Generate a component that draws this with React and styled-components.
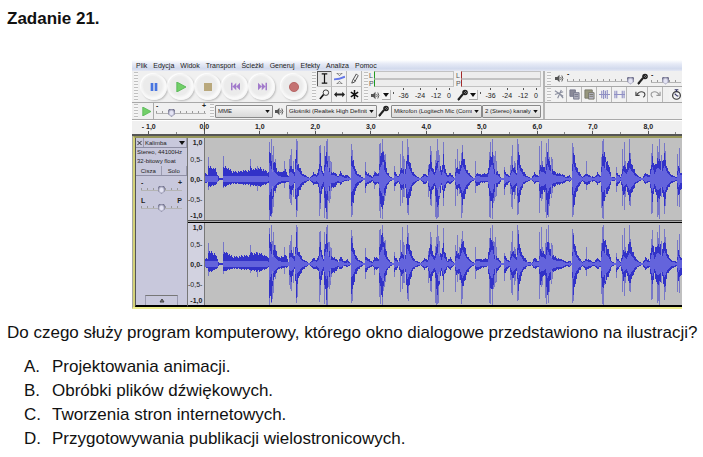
import React from "react";
import styled, { createGlobalStyle, css } from "styled-components";

const GlobalStyle = createGlobalStyle`
  * { box-sizing: border-box; }
  body { margin: 0; background: #fff; color: #111; font-family: "Liberation Sans", Arial, sans-serif; }
  button, select, input { font: inherit; color: inherit; margin: 0; padding: 0; border: 0; }
`;

const Page = styled.main`
  padding: 7px 7px 0;
  font-size: 17px;
`;
const Title = styled.h1`
  margin: 0;
  font-size: 17px;
  line-height: 24px;
`;
const Question = styled.p`
  margin: 0;
  padding-top: 12px;
  line-height: 24px;
  white-space: nowrap;
`;
const Answers = styled.ol`
  list-style: none;
  margin: 10px 0 0;
  padding: 0 0 0 17px;
`;
const Answer = styled.li`
  display: flex;
  line-height: 24px;
`;
const Letter = styled.span`
  width: 28px;
`;

/* ---------- editor window ---------- */
const Editor = styled.figure`
  margin: 29px 14px 0 125px;
  background: #f0f0f0;
  color: #222;
  font-size: 7px;
  line-height: 8px;
  overflow: hidden;
`;
const Menu = styled.nav`
  display: flex;
  gap: 6px;
  height: 11px;
  padding-left: 4px;
  align-items: center;
  background: linear-gradient(#fff, #e6eaf6 35%, #d2daed 80%, #e4e8f4);
`;
const MenuItem = styled.button`
  background: none;
  line-height: 8px;
`;
const Bars = styled.div`
  display: flex;
  border-bottom: 1px solid #aaa;
`;
const LeftBars = styled.div`
  width: 413px;
  flex: none;
  border-right: 2px solid #b4b4b4;
`;
const RightBars = styled.div`
  flex: 1;
  min-width: 0;
`;
const Bar = styled.div`
  display: flex;
  align-items: center;
  height: ${(p) => p.$h}px;
  overflow: hidden;
  border-bottom: ${(p) => (p.$line ? "1px solid #a8a8a8" : "0")};
`;
const Grip = styled.span`
  flex: none;
  align-self: stretch;
  width: 4px;
  margin: 1px 1px 1px 2px;
  background: repeating-linear-gradient(#c0c0c0 0 1px, #f6f6f6 1px 3px);
`;
const Transport = styled.div`
  display: flex;
  gap: 1px;
  width: 171px;
  padding-left: 2px;
`;
const RoundButton = styled.button`
  display: grid;
  place-items: center;
  width: 26px;
  height: 26px;
  border-radius: 50%;
  background: radial-gradient(circle at 45% 45%, #ebebeb 45%, #fafafa 62%, #e6e6e6);
  box-shadow: 1px 1px 2px #bbb, -1px -1px 1px #fff;
  margin-left: ${(p) => (p.$apart ? "5px" : "0")};
`;
const Tools = styled.div`
  display: grid;
  grid-template-columns: repeat(3, 15px);
  grid-auto-rows: 16px;
  align-self: stretch;
`;
const Tool = styled.button`
  display: grid;
  place-items: center;
  background: ${(p) => (p.$on ? "#e2e2e2" : "#f2f2f2")};
  border-right: 1px solid #b8b8b8;
  border-bottom: 1px solid #c4c4c4;
  ${(p) => p.$on && css`box-shadow: inset 1px 1px 0 #555;`}
`;
const Meters = styled.div`
  display: flex;
  gap: 2px;
  flex: 1;
  align-self: stretch;
`;
const Meter = styled.div`
  width: 85px;
`;
const MeterLine = styled.div`
  display: flex;
  height: 8px;
  color: #555;
  line-height: 9px;
`;
const Level = styled.div`
  flex: 1;
  border: 1px solid #c2c2c2;
  border-left: 1px solid ${(p) => p.$color};
  background: #ededed;
`;
const Channel = styled.span`
  width: 5px;
`;
const MeterScale = styled.div`
  display: flex;
  height: 16px;
  align-items: center;
`;
const DropButton = styled.button`
  display: grid;
  place-items: center;
  width: 9px;
  height: 10px;
  background: #f6f6f6;
  border-right: 1px solid #bbb;
  border-bottom: 1px solid #aaa;
`;
const Mark = styled.span`
  width: ${(p) => p.$w}px;
  text-align: center;
  white-space: nowrap;
  &::before {
    content: "";
    display: block;
    width: 1px;
    height: 2px;
    margin: -2px auto 2px;
    background: #555;
  }
`;
const Range = styled.input.attrs({ type: "range" })`
  appearance: none;
  flex: ${(p) => (p.$w ? "none" : 1)};
  min-width: 0;
  width: ${(p) => p.$w || 30}px;
  height: 10px;
  background:
    linear-gradient(#b4b4b4, #b4b4b4) 0 5px / 100% 1px no-repeat,
    repeating-linear-gradient(90deg, #999 0 1px, transparent 1px 6px) 0 3px / 100% 3px no-repeat;
  &::-webkit-slider-thumb {
    appearance: none;
    width: 7px;
    height: 8px;
    background: radial-gradient(#e4e4f4 30%, #70708c 75%);
    clip-path: polygon(15% 0, 85% 0, 100% 20%, 100% 65%, 50% 100%, 0 65%, 0 20%);
  }
`;
const SliderBox = styled.label`
  display: flex;
  flex: ${(p) => (p.$w ? "none" : 1)};
  flex-direction: column;
  width: ${(p) => (p.$w ? p.$w + "px" : "auto")};
  min-width: 0;
  font-weight: bold;
`;
const Ends = styled.span`
  display: flex;
  justify-content: space-between;
  height: 4px;
  line-height: 4px;
`;
const PickerBox = styled.span`
  display: grid;
  flex: none;
  align-items: center;
  width: ${(p) => p.$w}px;
  font-size: 6px;
  & > * { grid-area: 1 / 1; }
  & > svg { justify-self: end; margin-right: 3px; pointer-events: none; }
`;
const PickerSelect = styled.select`
  appearance: none;
  width: 100%;
  min-width: 0;
  height: 13px;
  padding: 0 9px 0 2px;
  border: 1px solid #8a8a8a;
  border-radius: 1px;
  text-overflow: clip;
  background: linear-gradient(#f4f4f4, #dadada);
`;
const IconSlot = styled.span`
  display: grid;
  place-items: center;
  flex: none;
  width: ${(p) => p.$w}px;
`;
const PlayBox = styled.button`
  display: grid;
  place-items: center;
  width: 15px;
  height: 16px;
  background: #f0f0f0;
  border-right: 1px solid #aaa;
`;
const EditButton = styled.button`
  display: grid;
  place-items: center;
  flex: none;
  width: 15px;
  height: 15px;
  background: #f2f2f2;
  border-right: 1px solid #b8b8b8;
  margin-left: ${(p) => (p.$apart ? "6px" : "0")};
`;
const Timeline = styled.div`
  border-top: 1px solid #fff;
  border-bottom: 2px solid #555;
  overflow: hidden;
`;
const Seconds = styled.div`
  display: grid;
  grid-template-columns: repeat(10, 1fr);
  margin-left: -11px;
  padding-right: 6px;
`;
const Second = styled.span`
  height: 13px;
  line-height: 12px;
  font-weight: bold;
  text-align: center;
  background:
    linear-gradient(#555, #555) 50% 100% / 1px 3px no-repeat,
    linear-gradient(#888, #888) 100% 100% / 1px 2px no-repeat;
  ${(p) => p.$start && css`background: linear-gradient(#555, #555) 50% 100% / 1px 12px no-repeat;`}
`;
const Track = styled.section`
  display: flex;
  border-left: 1px solid #a5a5a0;
  border-bottom: 2px solid #ecec8c;
`;
const TrackFrame = styled.div`
  display: flex;
  flex: 1;
  min-width: 0;
  border-left: 2px solid #d4d278;
  border-top: 2px solid #96965a;
`;
const TrackPanel = styled.div`
  display: flex;
  flex-direction: column;
  width: 53px;
  flex: none;
  background: #c8c8dc;
  border-left: 1px solid #555;
  border-right: 1px solid #777;
  border-bottom: 2px solid #000;
`;
const PanelRow = styled.div`
  display: flex;
  height: 10px;
  align-items: center;
  border-bottom: 1px solid #8f8fa5;
`;
const PanelButton = styled.button`
  display: flex;
  align-items: center;
  justify-content: ${(p) => (p.$spread ? "space-between" : "center")};
  flex: ${(p) => (p.$w ? "none" : 1)};
  width: ${(p) => p.$w || 10}px;
  height: 9px;
  padding: 0 1px;
  font-size: 6px;
  line-height: 8px;
  background: none;
  border-right: 1px solid #9b9bb0;
`;
const PanelText = styled.div`
  padding-left: 1px;
  font-size: 6px;
  line-height: 9px;
  white-space: nowrap;
`;
const PanelSliders = styled.div`
  display: grid;
  gap: 4px;
  padding: 5px 5px 0;
`;
const Collapse = styled.button`
  display: grid;
  place-items: center;
  width: 33px;
  height: 10px;
  margin: auto auto 0;
  background: #c8c8dc;
  border: 1px solid #9b9bb0;
  border-top: 1px solid #777;
  border-bottom: 0;
`;
const Channels = styled.div`
  flex: 1;
  min-width: 0;
  border-bottom: 2px solid #000;
`;
const ChannelRow = styled.div`
  display: flex;
  height: 82px;
`;
const ChannelGap = styled.div`
  height: 3px;
  border-top: 1px solid #555;
  border-bottom: 1px solid #000;
  background: #aaa;
`;
const Amplitudes = styled.div`
  display: grid;
  grid-template-rows: 9px 25px 15px 25px 8px;
  align-items: center;
  width: 17px;
  flex: none;
  padding-right: 2px;
  text-align: right;
  background: #d2d2e0;
  border-right: 1px solid #777;
`;
const Amplitude = styled.span`
  font-weight: ${(p) => (p.$strong ? "bold" : "normal")};
`;
const WaveSvg = styled.svg`
  display: block;
  flex: 1;
  min-width: 0;
  height: 82px;
  background: #c0c0c0;
`;

/* ---------- wave form ---------- */
// One-sample-wide maxima: [position, above, below]
const PEAKS = [
  [3,22,11],[18,23,9],[45,20,8],[52,13,12],[64,37,41],[66,40,38],[67,24,34],[68,33,28],[70,20,14],[79,18,9],
  [84,20,20],[85,24,24],[86,30,26],[88,18,18],[90,16,14],[91,40,38],[92,38,32],[114,33,37],[115,34,30],[119,33,39],[121,38,40],[122,40,40],
  [123,23,22],[124,23,24],[125,18,20],[126,17,12],[146,35,38],[147,29,36],[160,17,14],[169,8,10],[174,35,32],[175,36,39],[177,40,40],[178,28,26],[179,24,22],[180,25,17],
  [189,13,12],[195,25,27],[197,38,24],[198,23,18],[199,20,18],[202,40,34],[203,32,36],[223,14,18],[225,33,26],[226,28,27],[230,19,38],[231,28,40],[232,40,39],
  [233,29,38],[234,24,20],[238,37,27],[239,24,17],[251,20,27],[253,30,17],[255,18,15],[257,26,39],[258,34,34],[271,18,14],[285,27,38],
  [286,37,39],[288,40,40],[289,24,24],[290,23,22],[291,28,18],[292,18,17],[300,12,16],[306,14,15],[307,23,28],[308,34,30],[310,18,20],[311,16,16],
  [313,40,36],[314,35,35],[335,33,34],[337,38,22],[338,18,20],[341,22,33],[342,36,39],[344,40,38],[345,22,27],[347,22,19],[348,20,14],
  [368,36,38],[369,32,36],[382,18,11],[397,22,29],[398,38,39],[399,40,40],[400,24,20],[412,12,13],[418,30,27],[420,37,31],[421,18,18],
  [425,40,26],[426,26,27],[447,26,35],[448,35,34],[453,33,38],[454,27,36],[455,40,40],[457,24,18],[459,18,18],[460,36,35],[461,28,27],[473,25,27],[475,31,28],
];
// Outline of the loud part: [position, above, below]
const BODY = [
  [0,6,4],[2,5,4],[3,14,8],[5,13,8],[10,11,6],[12,5,4],[14,1,1],[17,1,1],[18,13,8],[22,12,7],[27,8,5],[33,8,5],[38,9,6],
  [44,9,6],[45,13,7],[48,11,7],[54,12,8],[60,9,6],[63,7,4],[64,32,36],[66,20,38],[67,14,24],[69,20,14],[72,9,7],[75,7,5],[80,10,4],[83,3,3],
  [84,12,12],[86,14,18],[89,8,5],[91,32,34],[92,18,22],[94,13,13],[97,6,7],[101,3,3],[104,1,1],[106,3,3],[108,7,6],[111,4,5],
  [113,10,8],[115,26,24],[116,14,16],[118,6,8],[119,16,22],[121,30,36],[123,16,16],[126,8,10],[129,7,9],[133,3,4],[135,8,6],[139,3,2],[142,5,3],[145,1,1],
  [146,26,30],[148,20,25],[150,10,12],[153,5,6],[157,2,2],[159,1,1],[160,8,9],[163,6,5],[167,2,2],[169,7,6],[173,6,5],
  [174,18,20],[177,34,36],[179,22,18],[182,8,7],[185,2,2],[188,1,1],[189,8,8],[193,3,3],[196,12,12],[200,10,9],[202,30,32],[204,20,22],[207,9,8],
  [210,4,4],[215,1,1],[219,6,6],[222,4,3],[225,24,20],[227,14,13],[229,8,8],[232,22,34],[236,10,7],[238,26,20],[240,14,12],[243,4,4],
  [246,7,6],[250,1,1],[252,14,12],[255,10,10],[258,28,27],[260,20,20],[262,11,12],[266,4,4],[270,1,1],[272,6,8],[277,5,4],[283,6,3],
  [286,26,24],[288,28,30],[290,10,13],[293,8,8],[297,1,1],[299,1,1],[300,9,10],[305,3,3],[308,15,17],[312,8,8],[314,32,28],[316,16,17],
  [319,8,6],[323,3,3],[327,1,1],[330,7,5],[334,3,3],[336,15,21],[339,14,13],[341,9,12],[343,28,38],[345,18,20],[348,10,9],[353,6,6],
  [358,5,5],[362,2,2],[365,4,3],[367,1,1],[369,30,32],[371,18,20],[374,8,9],[378,2,2],[382,6,7],[387,3,3],[390,2,2],[393,7,6],[396,3,3],
  [398,26,28],[400,27,22],[404,16,14],[407,3,3],[411,1,1],[412,8,9],[416,2,2],[419,15,18],[422,12,10],[425,26,22],[428,15,14],[431,7,6],
  [435,2,2],[438,1,1],[441,7,6],[445,4,3],[448,24,24],[450,14,10],[453,22,24],[455,20,20],[458,19,15],[460,26,27],[463,12,11],[466,5,6],
  [470,3,3],[472,2,2],[474,15,18],[476,7,12],[478,7,12],
];

function buildWave(seed) {
  const mid = 41;
  let peak = "";
  let loud = "";
  let core = "";
  let gentle = "";
  PEAKS.forEach(([x, up, down]) => {
    peak += `M${x} ${mid - up + seed}h1V${mid + down + seed}h-1z`;
  });
  let at = 0;
  for (let x = 0; x < 478; x++) {
    while (BODY[at + 1][0] <= x) at++;
    const [x0, u0, d0] = BODY[at];
    const [x1, u1, d1] = BODY[at + 1];
    const t = (x - x0) / (x1 - x0);
    const ripple = ((x * 7 + seed * 3) % 5) / 5;
    const u = u0 + (u1 - u0) * t;
    const d = d0 + (d1 - d0) * t;
    const up = Math.max(1, Math.round(u * (1 - ripple * 0.25)));
    const down = Math.max(1, Math.round(d * (1 - ripple * 0.22)));
    loud += `M${x} ${mid - up}h1V${mid + down}h-1z`;
    const c = x < 63 ? (d > 3 ? 3 : 0) : Math.round(Math.min(u, d) * 0.5);
    if (c > 0) core += `M${x} ${mid - c}h1V${mid + c}h-1z`;
  }
  [67, 123, 125, 178, 199, 233, 234, 291, 347, 401, 457].forEach((x) => {
    gentle += `M${x} ${mid - 17}h1v34h-1z`;
  });
  return { peak, loud, core, gentle };
}

function Wave({ seed, label }) {
  const w = buildWave(seed);
  return (
    <WaveSvg viewBox="0 0 478 82" preserveAspectRatio="none" shapeRendering="crispEdges" role="img" aria-label={label}>
      <path d={w.peak} fill="#7777c8" />
      <path d={w.loud} fill="#3232c8" />
      <path d={w.gentle} fill="#8585cf" />
      <path d={w.core} fill="#6464dc" />
    </WaveSvg>
  );
}

/* ---------- icons ---------- */
const Svg = ({ s = 12, h, box = "0 0 12 12", children }) => (
  <svg width={s} height={h || s} viewBox={box} fill="none" aria-hidden="true">{children}</svg>
);
const Speaker = () => (
  <Svg s={9}><path d="M0 4h3l3-3v10l-3-3H0z" fill="#555" /><path d="M7.500 4q1.500 2 0 4M9 2q3 4 0 8" stroke="#333" /></Svg>
);
const Mic = () => (
  <Svg s={12}><path d="M1 11l5-6" stroke="#222" strokeWidth="2" /><path d="M1 11l2-1" stroke="#222" /><circle cx="8" cy="3.500" r="2.800" fill="#222" /><path d="M7 3l2 2M8 2l2 2" stroke="#aaa" strokeWidth=".6" /></Svg>
);
const Down = ({ s = 6 }) => <Svg s={s} h={s - 2} box="0 0 6 4"><path d="M0 0h6L3 4z" fill="#111" /></Svg>;
const Pause = () => <Svg s={8}><path d="M1 0h4v12H1zM7 0h4v12H7z" fill="#4774e0" /></Svg>;
const Play = ({ s = 10 }) => <Svg s={s}><path d="M1 0l11 6-11 6z" fill="#72cf68" stroke="#51b451" /></Svg>;
const Stop = () => <Svg s={8}><path d="M0 0h12v12H0z" fill="#b9a87c" /></Svg>;
const Skip = ({ next }) => (
  <Svg s={9}>
    {next
      ? <path d="M0 1l5 5-5 5zM5 1l5 5-5 5zM10 1h2v10h-2z" fill="#a27acb" />
      : <path d="M12 1L7 6l5 5zM7 1L2 6l5 5zM0 1h2v10H0z" fill="#a27acb" />}
  </Svg>
);
const Record = () => <Svg s={10}><circle cx="6" cy="6" r="5.500" fill="#c47373" stroke="#b25d5d" /></Svg>;

const TOOLS = [
  ["Zaznaczanie", <path key="a" d="M3 1h6M3 11h6M6 1v10" stroke="#111" strokeWidth="1.300" />],
  ["Obwiednia", <g key="b"><path d="M0 7q6 0 12-3" stroke="#6477e8" strokeWidth="2" /><path d="M3 0h6L6 3zM3 12h6L6 9z" stroke="#555" strokeWidth=".8" /></g>],
  ["Rysowanie", <path key="c" d="M4 8l4-7 2 2-4 7-3 1zM5 7l2 2" stroke="#444" />],
  ["Lupa", <g key="d"><circle cx="7.500" cy="4" r="3" stroke="#333" /><path d="M5 6l-4 5" stroke="#111" strokeWidth="1.800" /></g>],
  ["Przesuwanie", <path key="e" d="M0 6l3-3v2h6V3l3 3-3 3V7H3v2z" fill="#222" />],
  ["Uniwersalne", <path key="f" d="M6 1v10M2 3.500l8 5M10 3.500l-8 5" stroke="#111" strokeWidth="1.600" />],
];
const bars = "#8f8fc4";
const EDITS = [
  ["Wytnij", <g key="a" stroke="#8c90a0"><path d="M1 2l9 6M4 10L8 1M1 6l9-3M6 5l4 5" strokeWidth="1.300" /></g>],
  ["Kopiuj", <g key="b" stroke="#777a8c"><path d="M1 1h6v7H1z" fill="#8a8a98" /><path d="M5 4h6v7H5z" fill="#b0b0bd" /><path d="M6 6h4M6 8h4" /></g>],
  ["Wklej", <g key="c" stroke="#77776a"><path d="M1 1h8v9H1z" fill="#96967d" /><path d="M5 4h6v7H5z" fill="#b5b5c5" /><path d="M6 6h4M6 8h4" /></g>],
  ["Przytnij", <path key="d" d="M0 6h12M3 2v8M5 1v10M7 2v8M9 1v10" stroke={bars} strokeWidth="1.200" />],
  ["Wycisz", <path key="e" d="M0 6h12M1 2v8M3 2v8M9 2v8M11 2v8" stroke={bars} strokeWidth="1.200" />],
  ["Cofnij", <path key="f" d="M2 6l2-2q3-2 6 0 2 3-1 5M1 3v4h4" stroke="#444" strokeWidth="1.200" />, true],
  ["Ponów", <path key="g" d="M10 6L8 4Q5 2 2 4 0 7 3 9M11 3v4H7" stroke="#999" strokeWidth="1.200" />],
];

function Slider({ w, value, left = "-", right = "", label }) {
  return (
    <SliderBox $w={w}>
      <Ends><span>{left}</span><span>{right}</span></Ends>
      <Range $w={w} defaultValue={value} aria-label={label} />
    </SliderBox>
  );
}

function Picker({ w, label, value }) {
  return (
    <PickerBox $w={w}>
      <PickerSelect aria-label={label}><option>{value}</option></PickerSelect>
      <Down s={5} />
    </PickerBox>
  );
}

function LevelMeter({ color, icon, label }) {
  return (
    <Meter aria-label={label}>
      {["L", "P"].map((c) => (
        <MeterLine key={c}><Channel>{c}</Channel><Level $color={color} /></MeterLine>
      ))}
      <MeterScale>
        <IconSlot $w={13}>{icon}</IconSlot>
        <DropButton aria-label={label}><Down /></DropButton>
        <Mark $w={4} />
        <Mark $w={17}>-36</Mark>
        <Mark $w={16}>-24</Mark>
        <Mark $w={16}>-12</Mark>
        <Mark $w={10}>0</Mark>
      </MeterScale>
    </Meter>
  );
}

function ChannelView({ seed, label }) {
  return (
    <ChannelRow>
      <Amplitudes>
        {["1,0", "0,5-", "0,0-", "-0,5-", "-1,0"].map((v, i) => (
          <Amplitude key={v} $strong={i === 0 || i === 2 || i === 4}>{v}</Amplitude>
        ))}
      </Amplitudes>
      <Wave seed={seed} label={label} />
    </ChannelRow>
  );
}

const MENU = ["Plik", "Edycja", "Widok", "Transport", "Ścieżki", "Generuj", "Efekty", "Analiza", "Pomoc"];
const SECONDS = ["- 1,0", "0,0", "1,0", "2,0", "3,0", "4,0", "5,0", "6,0", "7,0", "8,0"];
const ANSWERS = [
  "Projektowania animacji.",
  "Obróbki plików dźwiękowych.",
  "Tworzenia stron internetowych.",
  "Przygotowywania publikacji wielostronicowych.",
];

export default function App() {
  return (
    <Page>
      <GlobalStyle />
      <Title>Zadanie 21.</Title>
      <Editor>
        <Menu>{MENU.map((m) => <MenuItem key={m}>{m}</MenuItem>)}</Menu>
        <Bars>
          <LeftBars>
            <Bar $h={32} $line>
              <Grip />
              <Transport>
                <RoundButton aria-label="Pauza"><Pause /></RoundButton>
                <RoundButton aria-label="Odtwarzaj"><Play /></RoundButton>
                <RoundButton aria-label="Zatrzymaj"><Stop /></RoundButton>
                <RoundButton aria-label="Na początek"><Skip /></RoundButton>
                <RoundButton aria-label="Na koniec"><Skip next /></RoundButton>
                <RoundButton aria-label="Nagrywaj" $apart><Record /></RoundButton>
              </Transport>
              <Grip />
              <Tools>
                {TOOLS.map(([name, art], i) => (
                  <Tool key={name} aria-label={name} $on={i === 0}><Svg s={11}>{art}</Svg></Tool>
                ))}
              </Tools>
              <Grip />
              <Meters>
                <LevelMeter color="#219a21" icon={<Speaker />} label="Poziom odtwarzania" />
                <LevelMeter color="#a32a2a" icon={<Mic />} label="Poziom nagrywania" />
              </Meters>
            </Bar>
            <Bar $h={16}>
              <Grip />
              <PlayBox aria-label="Odtwarzaj z prędkością"><Play s={9} /></PlayBox>
              <IconSlot $w={2} />
              <Slider w={50} value={28} right="+" label="Prędkość odtwarzania" />
              <IconSlot $w={2} />
              <Grip />
              <Picker w={58} label="System audio" value="MME" />
              <IconSlot $w={13}><Speaker /></IconSlot>
              <Picker w={91} label="Wyjście" value="Głośniki (Realtek High Definiti" />
              <IconSlot $w={14}><Mic /></IconSlot>
              <Picker w={91} label="Wejście" value="Mikrofon (Logitech Mic (Commu" />
              <Picker w={59} label="Kanały" value="2 (Stereo) kanały" />
            </Bar>
          </LeftBars>
          <RightBars>
            <Bar $h={16} $line>
              <Grip />
              <IconSlot $w={15}><Speaker /></IconSlot>
              <Slider w={67} value={100} label="Głośność wyjścia" />
              <IconSlot $w={17}><Mic /></IconSlot>
              <Slider value={48} label="Głośność wejścia" />
            </Bar>
            <Bar $h={16} $line>
              <Grip />
              {EDITS.map(([name, art, apart]) => (
                <EditButton key={name} aria-label={name} $apart={apart}><Svg s={11}>{art}</Svg></EditButton>
              ))}
              <EditButton aria-label="Blokada czasowa" $apart>
                <Svg s={11}><circle cx="6" cy="7" r="4.200" stroke="#333" strokeWidth="1.300" /><path d="M4 .8h4M6 1v2M6 7L4 5M6 7l2 1" stroke="#333366" strokeWidth="1.300" /></Svg>
              </EditButton>
            </Bar>
          </RightBars>
        </Bars>
        <Timeline>
          <Seconds>{SECONDS.map((s) => <Second key={s} $start={s === "0,0"}>{s}</Second>)}</Seconds>
        </Timeline>
        <Track>
          <TrackFrame>
            <TrackPanel>
              <PanelRow>
                <PanelButton $w={8} aria-label="Zamknij ścieżkę"><Svg s={6}><path d="M1 1l10 10M11 1L1 11" stroke="#111" strokeWidth="2" /></Svg></PanelButton>
                <PanelButton $spread>Kalimba <Down /></PanelButton>
              </PanelRow>
              <PanelText>Stereo, 44100Hz</PanelText>
              <PanelText>32-bitowy float</PanelText>
              <PanelRow>
                <PanelButton>Cisza</PanelButton>
                <PanelButton>Solo</PanelButton>
              </PanelRow>
              <PanelSliders>
                <Slider w={41} value={50} right="+" label="Wzmocnienie" />
                <Slider w={41} value={50} left="L" right="P" label="Panorama" />
              </PanelSliders>
              <Collapse aria-label="Zwiń ścieżkę"><Svg s={6} h={5} box="0 0 6 5"><path d="M3 1l2 3H1z" fill="#777" stroke="#444" /></Svg></Collapse>
            </TrackPanel>
            <Channels>
              <ChannelView seed={0} label="Kanał lewy" />
              <ChannelGap />
              <ChannelView seed={1} label="Kanał prawy" />
            </Channels>
          </TrackFrame>
        </Track>
      </Editor>
      <Question>Do czego służy program komputerowy, którego okno dialogowe przedstawiono na ilustracji?</Question>
      <Answers>
        {ANSWERS.map((a, i) => (
          <Answer key={a}><Letter>{"ABCD"[i]}.</Letter><span>{a}</span></Answer>
        ))}
      </Answers>
    </Page>
  );
}
